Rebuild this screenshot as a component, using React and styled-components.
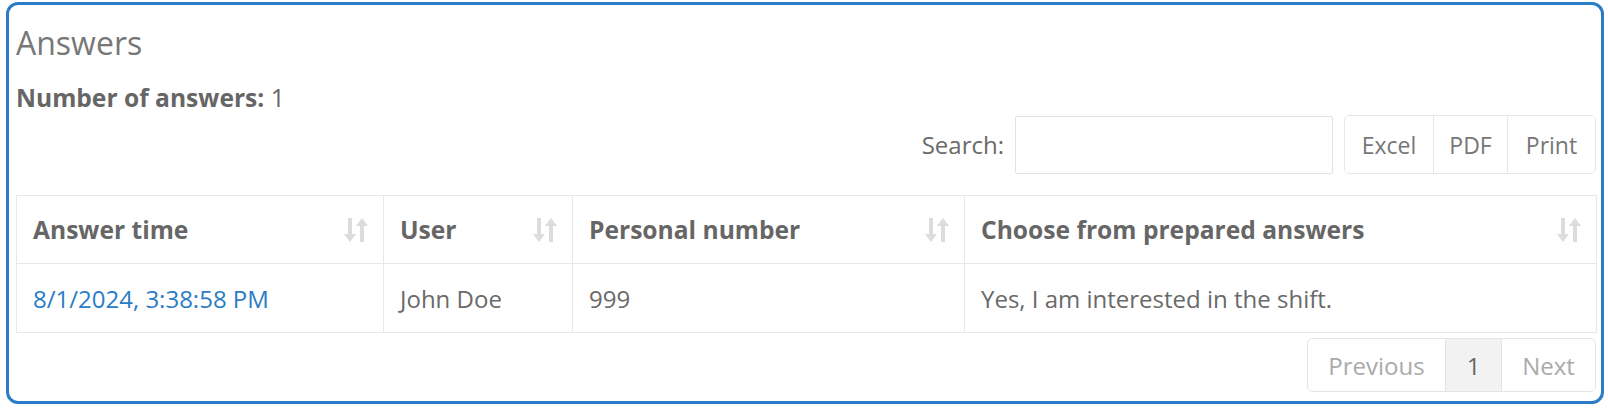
import React from 'react';
import styled, { createGlobalStyle } from 'styled-components';

const GlobalStyle = createGlobalStyle`
  html, body {
    margin: 0;
    padding: 0;
    background: #fff;
  }
  body {
    font-family: "Open Sans", "DejaVu Sans", sans-serif;
    color: #666;
  }
`;

const Page = styled.div`
  padding: 2px 4px 0 6px;
`;

const Panel = styled.div`
  border: 3px solid #2b7cc6;
  border-radius: 12px;
  padding: 18px 5px 10px 7px;
  height: 402px;
  box-sizing: border-box;
`;

const Title = styled.h3`
  margin: 0;
  font-size: 32px;
  line-height: 40px;
  font-weight: 400;
  color: #777;
`;

const Count = styled.div`
  margin-top: 20px;
  font-size: 24.6px;
  line-height: 30px;
  color: #666;

  b {
    font-weight: 700;
  }
`;

const Toolbar = styled.div`
  display: flex;
  justify-content: flex-end;
  align-items: center;
  margin-top: 2px;
  height: 59px;
`;

const SearchLabel = styled.label`
  font-size: 24px;
  color: #6a6a6a;
  margin-right: 11px;
`;

const SearchInput = styled.input`
  width: 318px;
  height: 58px;
  box-sizing: border-box;
  border: 1px solid #e2e2e2;
  border-radius: 2px;
  margin-right: 11px;
  outline: none;
`;

const ButtonGroup = styled.div`
  display: flex;
  height: 59px;
  border: 1px solid #e6e6e6;
  border-radius: 5px;
  box-sizing: border-box;
  overflow: hidden;
`;

const ExportButton = styled.button`
  width: ${p => p.$w}px;
  border: none;
  border-left: ${p => (p.$first ? 'none' : '1px solid #e6e6e6')};
  background: #fff;
  font-family: inherit;
  font-size: 23px;
  color: #777;
  padding: 0;
`;

const Table = styled.table`
  margin-top: 21px;
  width: 1580px;
  border-collapse: collapse;
  table-layout: fixed;
`;

const Th = styled.th`
  width: ${p => p.$w}px;
  height: 68px;
  box-sizing: border-box;
  border: 1px solid #e8e8e8;
  text-align: left;
  padding: 0 14px 0 16px;
  font-size: 24.6px;
  font-weight: 700;
  color: #666;
`;

const HeadInner = styled.div`
  display: flex;
  align-items: center;
  justify-content: space-between;
`;

const Td = styled.td`
  height: 69px;
  box-sizing: border-box;
  border: 1px solid #e8e8e8;
  padding: 0 16px;
  font-size: 24px;
  color: ${p => (p.$link ? '#2b7cc6' : '#6a6a6a')};
`;

const Pager = styled.div`
  display: flex;
  justify-content: flex-end;
  margin-top: 5px;
`;

const PagerGroup = styled.div`
  display: flex;
  height: 54px;
  border: 1px solid #e4e4e4;
  border-radius: 6px;
  box-sizing: border-box;
  overflow: hidden;
`;

const PageItem = styled.div`
  width: ${p => p.$w}px;
  display: flex;
  align-items: center;
  justify-content: center;
  font-size: 24px;
  color: ${p => (p.$active ? '#666' : '#aaa')};
  background: ${p => (p.$active ? '#f2f2f2' : '#fff')};
  border-left: ${p => (p.$first ? 'none' : '1px solid #e4e4e4')};
`;

const SortIcon = () => (
  <svg width="26" height="28" viewBox="0 0 26 28">
    <g fill="#dcdcdc">
      <rect x="5" y="2" width="4" height="18" />
      <polygon points="1,18 13,18 7,26" />
      <rect x="17" y="8" width="4" height="18" />
      <polygon points="13,10 25,10 19,2" />
    </g>
  </svg>
);

const columns = [
  { title: 'Answer time', w: 367 },
  { title: 'User', w: 189 },
  { title: 'Personal number', w: 392 },
  { title: 'Choose from prepared answers', w: 632 },
];

export default function App() {
  return (
    <Page>
      <GlobalStyle />
      <Panel>
        <Title>Answers</Title>
        <Count><b>Number of answers:</b> 1</Count>
        <Toolbar>
          <SearchLabel>Search:</SearchLabel>
          <SearchInput type="search" />
          <ButtonGroup>
            <ExportButton $w={88} $first>Excel</ExportButton>
            <ExportButton $w={74}>PDF</ExportButton>
            <ExportButton $w={88}>Print</ExportButton>
          </ButtonGroup>
        </Toolbar>
        <Table>
          <thead>
            <tr>
              {columns.map(c => (
                <Th key={c.title} $w={c.w}>
                  <HeadInner>
                    <span>{c.title}</span>
                    <SortIcon />
                  </HeadInner>
                </Th>
              ))}
            </tr>
          </thead>
          <tbody>
            <tr>
              <Td $link>8/1/2024, 3:38:58 PM</Td>
              <Td>John Doe</Td>
              <Td>999</Td>
              <Td>Yes, I am interested in the shift.</Td>
            </tr>
          </tbody>
        </Table>
        <Pager>
          <PagerGroup>
            <PageItem $w={137} $first>Previous</PageItem>
            <PageItem $w={55} $active>1</PageItem>
            <PageItem $w={93}>Next</PageItem>
          </PagerGroup>
        </Pager>
      </Panel>
    </Page>
  );
}
